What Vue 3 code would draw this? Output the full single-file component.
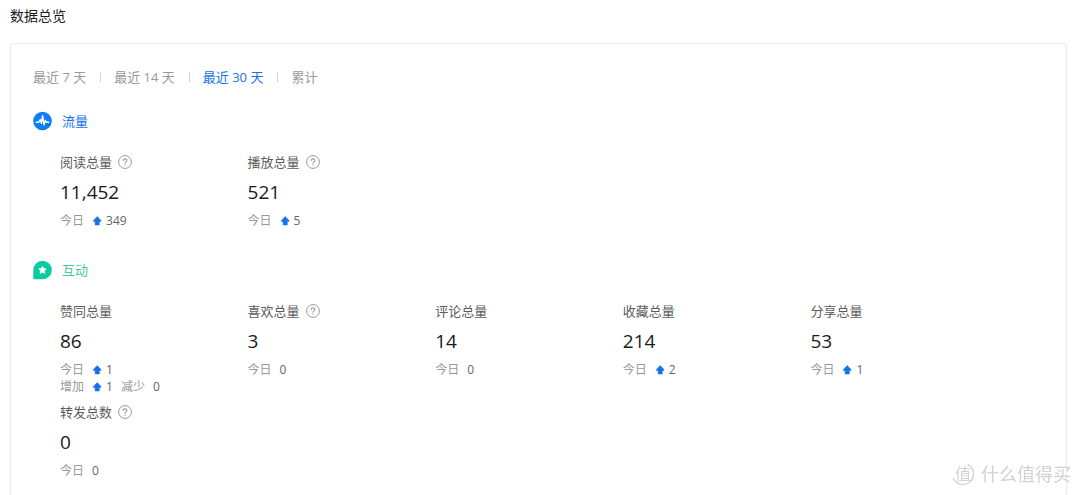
<script setup>
import { ref } from 'vue'

const ranges = ['最近 7 天', '最近 14 天', '最近 30 天', '累计']
const active = ref(2)

const groups = [
  {
    key: 'traffic',
    name: '流量',
    items: [
      { label: '阅读总量', help: true, total: '11,452', rows: [[{ name: '今日', up: true, value: 349 }]] },
      { label: '播放总量', help: true, total: '521', rows: [[{ name: '今日', up: true, value: 5 }]] },
    ],
  },
  {
    key: 'interact',
    name: '互动',
    items: [
      {
        label: '赞同总量',
        total: '86',
        rows: [
          [{ name: '今日', up: true, value: 1 }],
          [{ name: '增加', up: true, value: 1 }, { name: '减少', value: 0 }],
        ],
      },
      { label: '喜欢总量', help: true, total: '3', rows: [[{ name: '今日', value: 0 }]] },
      { label: '评论总量', total: '14', rows: [[{ name: '今日', value: 0 }]] },
      { label: '收藏总量', total: '214', rows: [[{ name: '今日', up: true, value: 2 }]] },
      { label: '分享总量', total: '53', rows: [[{ name: '今日', up: true, value: 1 }]] },
      { label: '转发总数', help: true, total: '0', rows: [[{ name: '今日', value: 0 }]] },
    ],
  },
]
</script>

<template>
  <main class="page">
    <h1 class="title">数据总览</h1>
    <section class="card">
      <nav class="tabs">
        <button
          v-for="(r, i) in ranges"
          :key="r"
          type="button"
          class="tab"
          :class="{ active: i === active }"
          @click="active = i"
        >{{ r }}</button>
      </nav>

      <section v-for="g in groups" :key="g.key" class="group" :class="g.key">
        <h2 class="group-head">
          <svg v-if="g.key === 'traffic'" class="group-icon" viewBox="0 0 20 20" aria-hidden="true">
            <circle cx="9.5" cy="10" r="9.3" fill="#0f7df5" />
            <path d="M3.2 11.2H5.8L7.3 8.6L8.4 12.4L9.6 4.8L11 13.8L12.3 9.4L13.3 11.2H15.8" fill="none" stroke="#fff" stroke-width="1.4" stroke-linejoin="round" stroke-linecap="round" />
          </svg>
          <svg v-else class="group-icon" viewBox="0 0 20 20" aria-hidden="true">
            <path d="M9.5 .7A9.3 9.3 0 1 1 9.5 19.3H1.2Q.3 19.3 .3 18.4V10A9.2 9.3 0 0 1 9.5 .7Z" fill="#0ccba0" />
            <path d="M9.5 6.1L10.7 8.5L13.4 8.9L11.4 10.8L11.9 13.5L9.5 12.2L7.1 13.5L7.6 10.8L5.6 8.9L8.3 8.5Z" fill="#fff" stroke="#fff" stroke-width=".6" stroke-linejoin="round" />
          </svg>
          <span>{{ g.name }}</span>
        </h2>
        <div class="grid">
          <article v-for="m in g.items" :key="m.label" class="metric">
            <h3 class="label">
              <span>{{ m.label }}</span>
              <svg v-if="m.help" class="help" viewBox="0 0 14 14" aria-hidden="true">
                <circle cx="7" cy="7" r="6.4" fill="none" stroke="#999" stroke-width="1" />
                <path d="M5.2 5.6C5.2 3.3 8.8 3.3 8.8 5.5C8.8 6.8 7 6.9 7 8.3" fill="none" stroke="#999" stroke-width="1.1" stroke-linecap="round" />
                <circle cx="7" cy="10.1" r=".7" fill="#999" />
              </svg>
            </h3>
            <p class="total">{{ m.total }}</p>
            <p v-for="(row, i) in m.rows" :key="i" class="row">
              <span v-for="c in row" :key="c.name" class="change">
                <span class="name">{{ c.name }}</span>
                <svg v-if="c.up" class="up" viewBox="0 0 10 10" aria-hidden="true">
                  <path d="M5.2 .6L9 4.4V5.6H7.3V9H3.1V5.6H1.4V4.4Z" fill="#1772e8" stroke="#1772e8" stroke-width=".5" stroke-linejoin="round" />
                </svg>
                <span class="value">{{ c.value }}</span>
              </span>
            </p>
          </article>
        </div>
      </section>
    </section>

    <div class="watermark">
      <span class="seal">
        <svg class="ring" viewBox="0 0 24 24" aria-hidden="true">
          <path d="M17 2.6A10.6 10.6 0 1 1 2.4 16.5" fill="none" stroke="#d2d2d2" stroke-width="1.3" stroke-linecap="round" />
        </svg>
        <span class="seal-text">值</span>
      </span>
      <span>什么值得买</span>
    </div>
  </main>
</template>

<style>
body {
  margin: 0;
  background: #fff;
}
</style>

<style scoped>
.page {
  box-sizing: border-box;
  min-height: 100vh;
  display: flex;
  flex-direction: column;
  padding: 6px 13px 0 10px;
  font-family: "Open Sans", "Noto Sans CJK SC", sans-serif;
  font-size: 13px;
  color: #1a1a1a;
}
h1, h2, h3, p {
  margin: 0;
  font-weight: 400;
}
.title {
  font-size: 14px;
  line-height: 20px;
  margin-bottom: 17px;
}
.card {
  flex: 1;
  border: 1px solid #ebebeb;
  border-bottom: 0;
  border-radius: 4px 4px 0 0;
  padding: 22px 68px 0 22px;
}
.tabs {
  display: flex;
  align-items: center;
  height: 22px;
}
.tab {
  display: flex;
  align-items: center;
  border: 0;
  padding: 0;
  background: none;
  font: inherit;
  line-height: 22px;
  color: #999;
  cursor: pointer;
}
.tab + .tab::before {
  content: "";
  width: 1px;
  height: 10px;
  margin: 0 13px 0 14px;
  background: #d3d3d3;
}
.tab.active {
  color: #1772e8;
}
.group {
  padding-top: 22px;
}
.group-head {
  display: flex;
  align-items: center;
  gap: 9px;
  height: 22px;
  font-size: 13px;
  line-height: 22px;
}
.group-icon {
  width: 20px;
  height: 20px;
}
.traffic .group-head {
  color: #1772e8;
}
.interact .group-head {
  color: #45c9a0;
}
.grid {
  display: grid;
  grid-template-columns: repeat(5, 1fr);
  row-gap: 7px;
  margin: 20px 0 0 27px;
}
.traffic .grid {
  margin-bottom: 8px;
}
.label {
  display: flex;
  align-items: center;
  gap: 6px;
  font-size: 13px;
  line-height: 20px;
  color: #5c5c5c;
}
.help {
  width: 14px;
  height: 14px;
}
.total {
  font-size: 19px;
  line-height: 26px;
  margin: 7px 0;
}
.row {
  display: flex;
  gap: 8px;
  font-size: 12px;
  line-height: 17px;
}
.change {
  display: flex;
  align-items: center;
}
.name {
  color: #999;
  margin-right: 8px;
}
.up {
  width: 10px;
  height: 10px;
  margin-right: 4px;
}
.value {
  color: #666;
}
.watermark {
  position: fixed;
  right: 9px;
  bottom: 9px;
  display: flex;
  align-items: center;
  gap: 6px;
  font-size: 18px;
  line-height: 24px;
  color: #d2d2d2;
  pointer-events: none;
}
.seal {
  display: grid;
  place-items: center;
  width: 24px;
  height: 24px;
}
.ring, .seal-text {
  grid-area: 1 / 1;
}
.ring {
  width: 24px;
  height: 24px;
}
.seal-text {
  font-size: 16px;
}
</style>
